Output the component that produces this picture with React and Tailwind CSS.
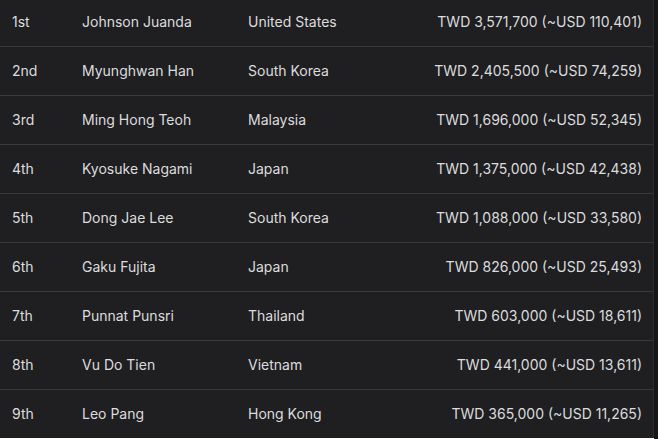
import React from "react";

const rows = [
  ["1st", "Johnson Juanda", "United States", "TWD 3,571,700 (~USD 110,401)"],
  ["2nd", "Myunghwan Han", "South Korea", "TWD 2,405,500 (~USD 74,259)"],
  ["3rd", "Ming Hong Teoh", "Malaysia", "TWD 1,696,000 (~USD 52,345)"],
  ["4th", "Kyosuke Nagami", "Japan", "TWD 1,375,000 (~USD 42,438)"],
  ["5th", "Dong Jae Lee", "South Korea", "TWD 1,088,000 (~USD 33,580)"],
  ["6th", "Gaku Fujita", "Japan", "TWD 826,000 (~USD 25,493)"],
  ["7th", "Punnat Punsri", "Thailand", "TWD 603,000 (~USD 18,611)"],
  ["8th", "Vu Do Tien", "Vietnam", "TWD 441,000 (~USD 13,611)"],
  ["9th", "Leo Pang", "Hong Kong", "TWD 365,000 (~USD 11,265)"],
];

export default function App() {
  return (
    <div className="w-[658px] h-[439px] overflow-hidden bg-white flex">
      <div className="w-[654px] h-[438px] overflow-hidden bg-[#1f1f21] border-r border-[#2a2a2c]">
        <div className="-mt-[2px]" style={{ fontFamily: "Inter, 'Liberation Sans', sans-serif" }}>
          {rows.map((r, i) => (
            <div
              key={i}
              className={`grid grid-cols-[70px_166px_1fr_auto] items-center h-[49px] pb-[2px] pl-3 pr-[11px] text-[14px] text-[#dcdcde] ${i < rows.length - 1 ? "border-b border-[#3a3a3d]" : ""}`}
            >
              <span>{r[0]}</span>
              <span>{r[1]}</span>
              <span>{r[2]}</span>
              <span className="text-right">{r[3]}</span>
            </div>
          ))}
        </div>
      </div>
      <div className="w-[4px] h-[439px] bg-[#161617]" />
    </div>
  );
}
